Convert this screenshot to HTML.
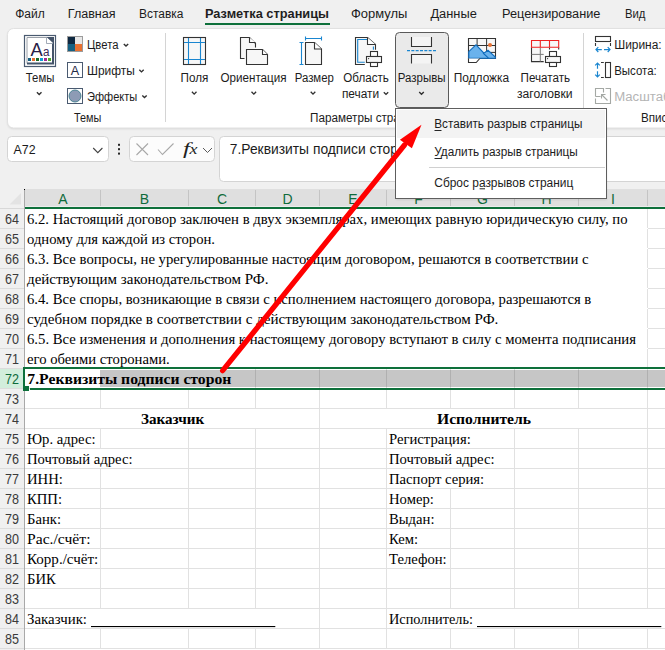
<!DOCTYPE html>
<html><head><meta charset="utf-8"><style>html,body{margin:0;padding:0;background:#f0f0f0;overflow:hidden}svg{display:block}</style></head>
<body><svg width="665" height="650" viewBox="0 0 665 650" shape-rendering="auto">
<rect x="0" y="0" width="665" height="650" fill="#f0f0f0" />
<text x="15.2" y="18" font-family="'Liberation Sans', sans-serif" font-size="12" fill="#1c1c1c" textLength="29.6" lengthAdjust="spacingAndGlyphs" >Файл</text>
<text x="67.8" y="18" font-family="'Liberation Sans', sans-serif" font-size="12" fill="#1c1c1c" textLength="47.8" lengthAdjust="spacingAndGlyphs" >Главная</text>
<text x="139" y="18" font-family="'Liberation Sans', sans-serif" font-size="12" fill="#1c1c1c" textLength="44.4" lengthAdjust="spacingAndGlyphs" >Вставка</text>
<text x="351" y="18" font-family="'Liberation Sans', sans-serif" font-size="12" fill="#1c1c1c" textLength="56.4" lengthAdjust="spacingAndGlyphs" >Формулы</text>
<text x="430.4" y="18" font-family="'Liberation Sans', sans-serif" font-size="12" fill="#1c1c1c" textLength="46.4" lengthAdjust="spacingAndGlyphs" >Данные</text>
<text x="502" y="18" font-family="'Liberation Sans', sans-serif" font-size="12" fill="#1c1c1c" textLength="98.4" lengthAdjust="spacingAndGlyphs" >Рецензирование</text>
<text x="624.9" y="18" font-family="'Liberation Sans', sans-serif" font-size="12" fill="#1c1c1c" textLength="20.5" lengthAdjust="spacingAndGlyphs" >Вид</text>
<text x="205" y="18" font-family="'Liberation Sans', sans-serif" font-size="12" fill="#1f1f1f" font-weight="bold" textLength="124" lengthAdjust="spacingAndGlyphs" >Разметка страницы</text>
<rect x="205" y="23" width="125" height="2" fill="#0e703b" />
<defs><filter id="sh" x="-5%" y="-20%" width="110%" height="140%"><feGaussianBlur stdDeviation="1.2"/></filter></defs>
<rect x="7.5" y="29.5" width="700" height="99.5" rx="6" fill="#000" opacity="0.10" filter="url(#sh)"/>
<rect x="7.5" y="28.5" width="700" height="99.5" rx="6" fill="#ffffff" stroke="#e1e1e1" stroke-width="1"/>
<rect x="24.5" y="35.5" width="31" height="31" fill="#fff" stroke="#4a5a70" stroke-width="1.2"/>
<path d="M27 63.5 V37.5 H47" fill="none" stroke="#9aa0a8" stroke-width="1"/>
<path d="M53 43 V63.5 H27" fill="none" stroke="#44546a" stroke-width="2"/>
<path d="M46.5 37 H54 V44 Z" fill="#44546a"/>
<path d="M46.5 37.5 V43.5 H53" fill="#fff" stroke="#8a95a5" stroke-width="0.8"/>
<text x="30.6" y="55.5" font-family="'Liberation Sans', sans-serif" font-size="18" fill="#2a1d47" textLength="12.2" lengthAdjust="spacingAndGlyphs" >A</text>
<text x="43" y="55.5" font-family="'Liberation Sans', sans-serif" font-size="12" fill="#3b2b5c" textLength="6.5" lengthAdjust="spacingAndGlyphs" >a</text>
<rect x="28" y="58" width="3" height="3" fill="#156082" />
<rect x="32" y="58" width="3" height="3" fill="#e97132" />
<rect x="36" y="58" width="3" height="3" fill="#196b24" />
<rect x="40" y="58" width="3" height="3" fill="#0f9ed5" />
<rect x="44" y="58" width="3" height="3" fill="#a02b93" />
<rect x="48" y="58" width="3" height="3" fill="#4ea72e" />
<text x="25.8" y="82.3" font-family="'Liberation Sans', sans-serif" font-size="12" fill="#1c1c1c" textLength="28.6" lengthAdjust="spacingAndGlyphs" >Темы</text>
<path d="M36.900000000000006 92.25 L39.2 94.55000000000001 L41.5 92.25" fill="none" stroke="#303030" stroke-width="1.35"/>
<rect x="67.5" y="36.5" width="15" height="15" fill="#fff" stroke="#9c9c9c" stroke-width="1"/>
<rect x="68" y="37" width="7" height="7" fill="#0e2841" />
<rect x="75" y="37" width="7" height="7" fill="#e8e8e8" />
<rect x="68" y="44" width="7" height="7" fill="#156082" />
<rect x="75" y="44" width="7" height="7" fill="#e97132" />
<text x="87" y="49" font-family="'Liberation Sans', sans-serif" font-size="12" fill="#1c1c1c" textLength="31.5" lengthAdjust="spacingAndGlyphs" >Цвета</text>
<path d="M123.8 43.9 L126 46.1 L128.2 43.9" fill="none" stroke="#303030" stroke-width="1.35"/>
<rect x="67.5" y="62.5" width="15" height="15" fill="#fff" stroke="#4a5a70" stroke-width="1"/>
<text x="70.8" y="75.2" font-family="'Liberation Sans', sans-serif" font-size="13" fill="#1f2a44" textLength="8.4" lengthAdjust="spacingAndGlyphs" >A</text>
<text x="87" y="75" font-family="'Liberation Sans', sans-serif" font-size="12" fill="#1c1c1c" textLength="47.8" lengthAdjust="spacingAndGlyphs" >Шрифты</text>
<path d="M139.3 69.7 L141.5 71.89999999999999 L143.7 69.7" fill="none" stroke="#303030" stroke-width="1.35"/>
<rect x="67.5" y="88.5" width="15" height="15" fill="#fff" stroke="#4a5a70" stroke-width="1"/>
<circle cx="75" cy="96" r="6" fill="#8d9bb5" stroke="#3f7d8c" stroke-width="0.9"/>
<text x="87" y="101" font-family="'Liberation Sans', sans-serif" font-size="12" fill="#1c1c1c" textLength="50.3" lengthAdjust="spacingAndGlyphs" >Эффекты</text>
<path d="M142.3 95.4 L144.5 97.6 L146.7 95.4" fill="none" stroke="#303030" stroke-width="1.35"/>
<text x="74" y="122" font-family="'Liberation Sans', sans-serif" font-size="12" fill="#1c1c1c" textLength="27.3" lengthAdjust="spacingAndGlyphs" >Темы</text>
<rect x="165" y="33" width="1" height="89" fill="#d4d4d4" />
<rect x="183.5" y="37.5" width="22" height="27" fill="#f7f7f7" stroke="#333333" stroke-width="1.1"/>
<path d="M188.5 38 V64 M200.5 38 V64 M184 42.5 H205 M184 59.5 H205" stroke="#1a86d0" stroke-width="1.1"/>
<text x="180.6" y="82.1" font-family="'Liberation Sans', sans-serif" font-size="12" fill="#1c1c1c" textLength="27.8" lengthAdjust="spacingAndGlyphs" >Поля</text>
<path d="M191.89999999999998 91.85 L194.2 94.15 L196.5 91.85" fill="none" stroke="#303030" stroke-width="1.35"/>
<path d="M244.5 58.5 H240.5 V37.5 H249.5 L255.5 43.5 V47.5" fill="#f7f7f7" stroke="#333333" stroke-width="1.1"/>
<path d="M249.5 37.5 V42.5 H255.5" fill="#fff" stroke="#333333" stroke-width="1.1"/>
<path d="M246.5 49.5 H262.5 L267.5 54.5 V64.5 H246.5 Z" fill="#f7f7f7" stroke="#333333" stroke-width="1.1"/>
<path d="M262.5 49.5 V54.5 H267.5" fill="#fff" stroke="#333333" stroke-width="1.1"/>
<text x="220.5" y="82.1" font-family="'Liberation Sans', sans-serif" font-size="12" fill="#1c1c1c" textLength="66" lengthAdjust="spacingAndGlyphs" >Ориентация</text>
<path d="M251.5 91.85 L253.8 94.15 L256.1 91.85" fill="none" stroke="#303030" stroke-width="1.35"/>
<path d="M305.5 42.5 H314.5 L321.5 49 V64.5 H305.5 Z" fill="#f7f7f7" stroke="#333333" stroke-width="1.1"/>
<path d="M314.5 42.5 V49 H321.5" fill="#fff" stroke="#333333" stroke-width="1.1"/>
<path d="M305.5 38.5 H321.5 M305.5 36.5 V40.5 M321.5 36.5 V40.5 M301.5 42.5 V64.5 M299.5 42.5 H303.5 M299.5 64.5 H303.5" stroke="#1a86d0" stroke-width="1.1" fill="none"/>
<text x="294.7" y="82.1" font-family="'Liberation Sans', sans-serif" font-size="12" fill="#1c1c1c" textLength="39.2" lengthAdjust="spacingAndGlyphs" >Размер</text>
<path d="M310.7 91.85 L313 94.15 L315.3 91.85" fill="none" stroke="#303030" stroke-width="1.35"/>
<path d="M364.8 64.5 H355.5 V37.5 H367.5 L375.5 44.5 V49.7" fill="#f7f7f7" stroke="#333333" stroke-width="1.1"/>
<path d="M367.5 37.5 V44.5 H375.5" fill="#fff" stroke="#333333" stroke-width="1.1"/>
<path d="M367 39.5 H357.7 V62.3 H364.8 M373.4 46.5 V49.7" fill="none" stroke="#1a86d0" stroke-width="1.1"/>
<rect x="370.5" y="51.5" width="7" height="5" fill="#fff" stroke="#333333" stroke-width="1.1"/>
<rect x="366.5" y="56.5" width="15" height="6" fill="#f7f7f7" stroke="#333333" stroke-width="1.1"/>
<rect x="370.5" y="62.5" width="7" height="4" fill="#fff" stroke="#333333" stroke-width="1.1"/>
<circle cx="368.6" cy="58.6" r="0.6" fill="#333333"/>
<text x="343.3" y="82.1" font-family="'Liberation Sans', sans-serif" font-size="12" fill="#1c1c1c" textLength="45.5" lengthAdjust="spacingAndGlyphs" >Область</text>
<text x="341.9" y="97.8" font-family="'Liberation Sans', sans-serif" font-size="12" fill="#1c1c1c" textLength="37.3" lengthAdjust="spacingAndGlyphs" >печати</text>
<path d="M383.8 92.2 L386 94.39999999999999 L388.2 92.2" fill="none" stroke="#303030" stroke-width="1.35"/>
<rect x="395.5" y="32.5" width="53" height="75" rx="4" fill="#eaeaea" stroke="#5a5a5a" stroke-width="1"/>
<path d="M411.5 37 V46.5 H431.5 V37 M411.5 63.5 V54.5 H431.5 V63.5" fill="#f4f4f4" stroke="#333333" stroke-width="1.1"/>
<path d="M407 50.6 H436" stroke="#1a86d0" stroke-width="1.2" stroke-dasharray="3 1.33"/>
<text x="397.8" y="81.6" font-family="'Liberation Sans', sans-serif" font-size="12" fill="#1c1c1c" textLength="47.8" lengthAdjust="spacingAndGlyphs" >Разрывы</text>
<path d="M419.2 92.05 L421.5 94.35000000000001 L423.8 92.05" fill="none" stroke="#303030" stroke-width="1.35"/>
<path d="M468.5 58.5 V38.5 H495.5 V58.5 Z" fill="#f7f7f7" stroke="#333333" stroke-width="1.1"/>
<path d="M477.1 38.5 V46 M486.6 38.5 V52 M468.5 45.5 H495.5 M486.6 52.4 H495.5" stroke="#333333" stroke-width="1"/>
<path d="M468.8 51.7 L476 44.9 L488.8 58.3 H468.8 Z" fill="#6ab2ec" stroke="#0f6cbd" stroke-width="1.1"/>
<path d="M483.5 53.5 L488 50.3 L495.3 57 V58.3 H488.8 Z" fill="#6ab2ec" stroke="#0f6cbd" stroke-width="1.1"/>
<circle cx="490" cy="45" r="2" fill="#e97132"/>
<path d="M468.5 58.5 V62.5 H476.2 L479.8 58.5" fill="#fff" stroke="#333333" stroke-width="1.1"/>
<text x="453.7" y="82.2" font-family="'Liberation Sans', sans-serif" font-size="12" fill="#1c1c1c" textLength="55.5" lengthAdjust="spacingAndGlyphs" >Подложка</text>
<rect x="531.5" y="47.3" width="12" height="14.3" fill="#f7f7f7"/>
<path d="M531.5 47.3 V61.6 H543.7 M549.5 47.3 V49.5 M558.7 47.3 V49.5" fill="none" stroke="#333333" stroke-width="1.1"/>
<path d="M540.3 47.3 V61.6 M531.5 54.4 H543.7" fill="none" stroke="#7a7a7a" stroke-width="1"/>
<path d="M531.5 40.5 H558.7 V47.3 H531.5 Z M540.3 40.5 V47.3 M549.5 40.5 V47.3" fill="#f7f7f7" stroke="#ee2222" stroke-width="1.1"/>
<rect x="549.5" y="51.5" width="7" height="5" fill="#fff" stroke="#333333" stroke-width="1.1"/>
<rect x="545.5" y="56.5" width="15" height="6" fill="#f7f7f7" stroke="#333333" stroke-width="1.1"/>
<rect x="549.5" y="62.5" width="7" height="4" fill="#fff" stroke="#333333" stroke-width="1.1"/>
<circle cx="547.6" cy="58.6" r="0.6" fill="#333333"/>
<text x="520.6" y="82.2" font-family="'Liberation Sans', sans-serif" font-size="12" fill="#1c1c1c" textLength="49.5" lengthAdjust="spacingAndGlyphs" >Печатать</text>
<text x="517" y="98" font-family="'Liberation Sans', sans-serif" font-size="12" fill="#1c1c1c" textLength="55.5" lengthAdjust="spacingAndGlyphs" >заголовки</text>
<text x="310" y="121.8" font-family="'Liberation Sans', sans-serif" font-size="12" fill="#1c1c1c" textLength="118" lengthAdjust="spacingAndGlyphs" >Параметры страницы</text>
<rect x="583" y="33" width="1" height="89" fill="#d4d4d4" />
<rect x="595.5" y="36.5" width="15" height="5" fill="#fff" stroke="#333333" stroke-width="1.1"/>
<path d="M595.5 43 V46 M610.5 43 V46" stroke="#333333" stroke-width="1.1"/>
<path d="M596 49.6 H601.8 M604 49.6 H610 M598.3 47.2 L596 49.6 L598.3 52 M607.7 47.2 L610 49.6 L607.7 52" fill="none" stroke="#1a86d0" stroke-width="1.2"/>
<text x="614.2" y="48.7" font-family="'Liberation Sans', sans-serif" font-size="12" fill="#1c1c1c" textLength="47.5" lengthAdjust="spacingAndGlyphs" >Ширина:</text>
<rect x="605.5" y="62.5" width="5" height="15" fill="#fff" stroke="#333333" stroke-width="1.1"/>
<path d="M601 62.5 H603.8 M601 77.5 H603.8" stroke="#333333" stroke-width="1.1"/>
<path d="M597.5 63 V68.8 M597.5 71.3 V77 M595.2 65.3 L597.5 63 L599.8 65.3 M595.2 74.7 L597.5 77 L599.8 74.7" fill="none" stroke="#1a86d0" stroke-width="1.2"/>
<text x="614.2" y="74.7" font-family="'Liberation Sans', sans-serif" font-size="12" fill="#1c1c1c" textLength="42.5" lengthAdjust="spacingAndGlyphs" >Высота:</text>
<path d="M595.5 96.5 V88.5 H603.5 V92.5 M600.5 96.5 H595.5 M605.5 88.5 H610.5 V103.5 H595.5 V98.5" fill="none" stroke="#a4a8a4" stroke-width="1.1"/>
<path d="M607.5 100.5 L601.5 94.5 M601.5 98.5 V94.5 H605.5" fill="none" stroke="#a4a8a4" stroke-width="1.1"/>
<text x="614.2" y="101" font-family="'Liberation Sans', sans-serif" font-size="12" fill="#b4b4b4" textLength="60" lengthAdjust="spacingAndGlyphs" >Масштаб:</text>
<text x="641" y="121.7" font-family="'Liberation Sans', sans-serif" font-size="12" fill="#1c1c1c" textLength="44" lengthAdjust="spacingAndGlyphs" >Вписать</text>
<rect x="7.5" y="136.5" width="101" height="25" rx="4" fill="#fff" stroke="#d4d4d4" stroke-width="1"/>
<text x="13.6" y="154" font-family="'Liberation Sans', sans-serif" font-size="13" fill="#1c1c1c" textLength="22" lengthAdjust="spacingAndGlyphs" >A72</text>
<path d="M93.2 148 L97.8 152.6 L102.4 148" fill="none" stroke="#424242" stroke-width="1.1"/>
<rect x="118" y="143.8" width="2" height="2" fill="#262626" />
<rect x="118" y="148.2" width="2" height="2" fill="#262626" />
<rect x="118" y="152.6" width="2" height="2" fill="#262626" />
<rect x="129.5" y="136.5" width="85" height="25" rx="4" fill="#fcfcfc" stroke="#d4d4d4" stroke-width="1"/>
<path d="M136.5 143.5 L148 155 M148 143.5 L136.5 155" stroke="#a8a8a8" stroke-width="1.1"/>
<path d="M158 149.5 L162.5 154.5 L173.5 143.5" fill="none" stroke="#a8a8a8" stroke-width="1.1"/>
<text x="183" y="153.5" font-family="'Liberation Serif', serif" font-size="17" fill="#222" textLength="7" lengthAdjust="spacingAndGlyphs" font-style="italic">f</text>
<text x="189.5" y="153.5" font-family="'Liberation Serif', serif" font-size="15" fill="#222" textLength="8" lengthAdjust="spacingAndGlyphs" font-style="italic">x</text>
<path d="M203 148 L207.5 152.5 L212 148" fill="none" stroke="#5a5a5a" stroke-width="1"/>
<rect x="219.5" y="136.5" width="480" height="45" rx="4" fill="#fff" stroke="#d4d4d4" stroke-width="1"/>
<text x="229.8" y="154.3" font-family="'Liberation Sans', sans-serif" font-size="14" fill="#1c1c1c" textLength="183.5" lengthAdjust="spacingAndGlyphs" >7.Реквизиты подписи сторон</text>
<rect x="25" y="189" width="640" height="18" fill="#dfdfdf" />
<rect x="25" y="206" width="640" height="1" fill="#ececec" />
<rect x="100" y="190" width="1" height="16" fill="#c4c4c4" />
<rect x="188" y="190" width="1" height="16" fill="#c4c4c4" />
<rect x="255" y="190" width="1" height="16" fill="#c4c4c4" />
<rect x="319" y="190" width="1" height="16" fill="#c4c4c4" />
<rect x="386" y="190" width="1" height="16" fill="#c4c4c4" />
<rect x="450" y="190" width="1" height="16" fill="#c4c4c4" />
<rect x="514" y="190" width="1" height="16" fill="#c4c4c4" />
<rect x="578" y="190" width="1" height="16" fill="#c4c4c4" />
<rect x="647" y="190" width="1" height="16" fill="#c4c4c4" />
<rect x="24" y="207" width="641" height="2" fill="#0e703b" />
<rect x="0" y="189" width="24" height="20" fill="#f0f0f0" />
<path d="M21 193 V204.5 H9.5 Z" fill="#e3e3e3"/>
<rect x="0" y="208" width="24" height="1" fill="#d8d8d8" />
<text x="63" y="204" font-family="'Liberation Sans', sans-serif" font-size="14" fill="#0f6b3b" text-anchor="middle" >A</text>
<text x="144.5" y="204" font-family="'Liberation Sans', sans-serif" font-size="14" fill="#0f6b3b" text-anchor="middle" >B</text>
<text x="222" y="204" font-family="'Liberation Sans', sans-serif" font-size="14" fill="#0f6b3b" text-anchor="middle" >C</text>
<text x="287.5" y="204" font-family="'Liberation Sans', sans-serif" font-size="14" fill="#0f6b3b" text-anchor="middle" >D</text>
<text x="353" y="204" font-family="'Liberation Sans', sans-serif" font-size="14" fill="#0f6b3b" text-anchor="middle" >E</text>
<text x="418.5" y="204" font-family="'Liberation Sans', sans-serif" font-size="14" fill="#0f6b3b" text-anchor="middle" >F</text>
<text x="482.5" y="204" font-family="'Liberation Sans', sans-serif" font-size="14" fill="#0f6b3b" text-anchor="middle" >G</text>
<text x="546.5" y="204" font-family="'Liberation Sans', sans-serif" font-size="14" fill="#0f6b3b" text-anchor="middle" >H</text>
<text x="613" y="204" font-family="'Liberation Sans', sans-serif" font-size="14" fill="#0f6b3b" text-anchor="middle" >I</text>
<text x="673.5" y="204" font-family="'Liberation Sans', sans-serif" font-size="14" fill="#0f6b3b" text-anchor="middle" >J</text>
<rect x="25" y="209" width="640" height="441" fill="#ffffff" />
<rect x="0" y="209" width="24" height="441" fill="#f0f0f0" />
<rect x="24" y="189" width="1" height="461" fill="#a9a9a9" />
<rect x="24" y="189" width="1" height="1" fill="#000" />
<rect x="0" y="228" width="24" height="1" fill="#dcdcdc" />
<rect x="0" y="248" width="24" height="1" fill="#dcdcdc" />
<rect x="0" y="268" width="24" height="1" fill="#dcdcdc" />
<rect x="0" y="288" width="24" height="1" fill="#dcdcdc" />
<rect x="0" y="308" width="24" height="1" fill="#dcdcdc" />
<rect x="0" y="328" width="24" height="1" fill="#dcdcdc" />
<rect x="0" y="348" width="24" height="1" fill="#dcdcdc" />
<rect x="0" y="368" width="24" height="1" fill="#dcdcdc" />
<rect x="0" y="388" width="24" height="1" fill="#dcdcdc" />
<rect x="0" y="408" width="24" height="1" fill="#dcdcdc" />
<rect x="0" y="428" width="24" height="1" fill="#dcdcdc" />
<rect x="0" y="448" width="24" height="1" fill="#dcdcdc" />
<rect x="0" y="468" width="24" height="1" fill="#dcdcdc" />
<rect x="0" y="488" width="24" height="1" fill="#dcdcdc" />
<rect x="0" y="508" width="24" height="1" fill="#dcdcdc" />
<rect x="0" y="528" width="24" height="1" fill="#dcdcdc" />
<rect x="0" y="548" width="24" height="1" fill="#dcdcdc" />
<rect x="0" y="568" width="24" height="1" fill="#dcdcdc" />
<rect x="0" y="588" width="24" height="1" fill="#dcdcdc" />
<rect x="0" y="608" width="24" height="1" fill="#dcdcdc" />
<rect x="0" y="628" width="24" height="1" fill="#dcdcdc" />
<rect x="0" y="648" width="24" height="1" fill="#dcdcdc" />
<rect x="0" y="369" width="24" height="19" fill="#d2eedc" />
<text x="12" y="224" font-family="'Liberation Sans', sans-serif" font-size="14" fill="#3a3a3a" textLength="14" lengthAdjust="spacingAndGlyphs" text-anchor="middle" >64</text>
<text x="12" y="244" font-family="'Liberation Sans', sans-serif" font-size="14" fill="#3a3a3a" textLength="14" lengthAdjust="spacingAndGlyphs" text-anchor="middle" >65</text>
<text x="12" y="264" font-family="'Liberation Sans', sans-serif" font-size="14" fill="#3a3a3a" textLength="14" lengthAdjust="spacingAndGlyphs" text-anchor="middle" >66</text>
<text x="12" y="284" font-family="'Liberation Sans', sans-serif" font-size="14" fill="#3a3a3a" textLength="14" lengthAdjust="spacingAndGlyphs" text-anchor="middle" >67</text>
<text x="12" y="304" font-family="'Liberation Sans', sans-serif" font-size="14" fill="#3a3a3a" textLength="14" lengthAdjust="spacingAndGlyphs" text-anchor="middle" >68</text>
<text x="12" y="324" font-family="'Liberation Sans', sans-serif" font-size="14" fill="#3a3a3a" textLength="14" lengthAdjust="spacingAndGlyphs" text-anchor="middle" >69</text>
<text x="12" y="344" font-family="'Liberation Sans', sans-serif" font-size="14" fill="#3a3a3a" textLength="14" lengthAdjust="spacingAndGlyphs" text-anchor="middle" >70</text>
<text x="12" y="364" font-family="'Liberation Sans', sans-serif" font-size="14" fill="#3a3a3a" textLength="14" lengthAdjust="spacingAndGlyphs" text-anchor="middle" >71</text>
<text x="12" y="384" font-family="'Liberation Sans', sans-serif" font-size="14" fill="#0f6b3b" textLength="14" lengthAdjust="spacingAndGlyphs" text-anchor="middle" >72</text>
<text x="12" y="404" font-family="'Liberation Sans', sans-serif" font-size="14" fill="#3a3a3a" textLength="14" lengthAdjust="spacingAndGlyphs" text-anchor="middle" >73</text>
<text x="12" y="424" font-family="'Liberation Sans', sans-serif" font-size="14" fill="#3a3a3a" textLength="14" lengthAdjust="spacingAndGlyphs" text-anchor="middle" >74</text>
<text x="12" y="444" font-family="'Liberation Sans', sans-serif" font-size="14" fill="#3a3a3a" textLength="14" lengthAdjust="spacingAndGlyphs" text-anchor="middle" >75</text>
<text x="12" y="464" font-family="'Liberation Sans', sans-serif" font-size="14" fill="#3a3a3a" textLength="14" lengthAdjust="spacingAndGlyphs" text-anchor="middle" >76</text>
<text x="12" y="484" font-family="'Liberation Sans', sans-serif" font-size="14" fill="#3a3a3a" textLength="14" lengthAdjust="spacingAndGlyphs" text-anchor="middle" >77</text>
<text x="12" y="504" font-family="'Liberation Sans', sans-serif" font-size="14" fill="#3a3a3a" textLength="14" lengthAdjust="spacingAndGlyphs" text-anchor="middle" >78</text>
<text x="12" y="524" font-family="'Liberation Sans', sans-serif" font-size="14" fill="#3a3a3a" textLength="14" lengthAdjust="spacingAndGlyphs" text-anchor="middle" >79</text>
<text x="12" y="544" font-family="'Liberation Sans', sans-serif" font-size="14" fill="#3a3a3a" textLength="14" lengthAdjust="spacingAndGlyphs" text-anchor="middle" >80</text>
<text x="12" y="564" font-family="'Liberation Sans', sans-serif" font-size="14" fill="#3a3a3a" textLength="14" lengthAdjust="spacingAndGlyphs" text-anchor="middle" >81</text>
<text x="12" y="584" font-family="'Liberation Sans', sans-serif" font-size="14" fill="#3a3a3a" textLength="14" lengthAdjust="spacingAndGlyphs" text-anchor="middle" >82</text>
<text x="12" y="604" font-family="'Liberation Sans', sans-serif" font-size="14" fill="#3a3a3a" textLength="14" lengthAdjust="spacingAndGlyphs" text-anchor="middle" >83</text>
<text x="12" y="624" font-family="'Liberation Sans', sans-serif" font-size="14" fill="#3a3a3a" textLength="14" lengthAdjust="spacingAndGlyphs" text-anchor="middle" >84</text>
<text x="12" y="644" font-family="'Liberation Sans', sans-serif" font-size="14" fill="#3a3a3a" textLength="14" lengthAdjust="spacingAndGlyphs" text-anchor="middle" >85</text>
<rect x="648" y="228" width="17" height="1" fill="#e1e1e1" />
<rect x="648" y="248" width="17" height="1" fill="#e1e1e1" />
<rect x="648" y="268" width="17" height="1" fill="#e1e1e1" />
<rect x="648" y="288" width="17" height="1" fill="#e1e1e1" />
<rect x="648" y="308" width="17" height="1" fill="#e1e1e1" />
<rect x="648" y="328" width="17" height="1" fill="#e1e1e1" />
<rect x="648" y="348" width="17" height="1" fill="#e1e1e1" />
<rect x="25" y="368" width="640" height="1" fill="#e1e1e1" />
<rect x="25" y="388" width="640" height="1" fill="#e1e1e1" />
<rect x="25" y="408" width="640" height="1" fill="#e1e1e1" />
<rect x="25" y="428" width="640" height="1" fill="#e1e1e1" />
<rect x="25" y="448" width="640" height="1" fill="#e1e1e1" />
<rect x="25" y="468" width="640" height="1" fill="#e1e1e1" />
<rect x="25" y="488" width="640" height="1" fill="#e1e1e1" />
<rect x="25" y="508" width="640" height="1" fill="#e1e1e1" />
<rect x="25" y="528" width="640" height="1" fill="#e1e1e1" />
<rect x="25" y="548" width="640" height="1" fill="#e1e1e1" />
<rect x="25" y="568" width="640" height="1" fill="#e1e1e1" />
<rect x="25" y="588" width="640" height="1" fill="#e1e1e1" />
<rect x="25" y="608" width="640" height="1" fill="#e1e1e1" />
<rect x="25" y="628" width="640" height="1" fill="#e1e1e1" />
<rect x="25" y="648" width="640" height="1" fill="#e1e1e1" />
<rect x="647" y="209" width="1" height="19" fill="#e1e1e1" />
<rect x="647" y="229" width="1" height="19" fill="#e1e1e1" />
<rect x="647" y="249" width="1" height="19" fill="#e1e1e1" />
<rect x="647" y="269" width="1" height="19" fill="#e1e1e1" />
<rect x="647" y="289" width="1" height="19" fill="#e1e1e1" />
<rect x="647" y="309" width="1" height="19" fill="#e1e1e1" />
<rect x="647" y="329" width="1" height="19" fill="#e1e1e1" />
<rect x="647" y="349" width="1" height="19" fill="#e1e1e1" />
<rect x="255" y="369" width="1" height="19" fill="#e1e1e1" />
<rect x="319" y="369" width="1" height="19" fill="#e1e1e1" />
<rect x="386" y="369" width="1" height="19" fill="#e1e1e1" />
<rect x="450" y="369" width="1" height="19" fill="#e1e1e1" />
<rect x="514" y="369" width="1" height="19" fill="#e1e1e1" />
<rect x="578" y="369" width="1" height="19" fill="#e1e1e1" />
<rect x="647" y="369" width="1" height="19" fill="#e1e1e1" />
<rect x="100" y="389" width="1" height="19" fill="#e1e1e1" />
<rect x="188" y="389" width="1" height="19" fill="#e1e1e1" />
<rect x="255" y="389" width="1" height="19" fill="#e1e1e1" />
<rect x="319" y="389" width="1" height="19" fill="#e1e1e1" />
<rect x="386" y="389" width="1" height="19" fill="#e1e1e1" />
<rect x="450" y="389" width="1" height="19" fill="#e1e1e1" />
<rect x="514" y="389" width="1" height="19" fill="#e1e1e1" />
<rect x="578" y="389" width="1" height="19" fill="#e1e1e1" />
<rect x="647" y="389" width="1" height="19" fill="#e1e1e1" />
<rect x="319" y="409" width="1" height="19" fill="#e1e1e1" />
<rect x="647" y="409" width="1" height="19" fill="#e1e1e1" />
<rect x="100" y="429" width="1" height="19" fill="#e1e1e1" />
<rect x="188" y="429" width="1" height="19" fill="#e1e1e1" />
<rect x="255" y="429" width="1" height="19" fill="#e1e1e1" />
<rect x="319" y="429" width="1" height="19" fill="#e1e1e1" />
<rect x="386" y="429" width="1" height="19" fill="#e1e1e1" />
<rect x="514" y="429" width="1" height="19" fill="#e1e1e1" />
<rect x="578" y="429" width="1" height="19" fill="#e1e1e1" />
<rect x="647" y="429" width="1" height="19" fill="#e1e1e1" />
<rect x="188" y="449" width="1" height="19" fill="#e1e1e1" />
<rect x="255" y="449" width="1" height="19" fill="#e1e1e1" />
<rect x="319" y="449" width="1" height="19" fill="#e1e1e1" />
<rect x="386" y="449" width="1" height="19" fill="#e1e1e1" />
<rect x="514" y="449" width="1" height="19" fill="#e1e1e1" />
<rect x="578" y="449" width="1" height="19" fill="#e1e1e1" />
<rect x="647" y="449" width="1" height="19" fill="#e1e1e1" />
<rect x="100" y="469" width="1" height="19" fill="#e1e1e1" />
<rect x="188" y="469" width="1" height="19" fill="#e1e1e1" />
<rect x="255" y="469" width="1" height="19" fill="#e1e1e1" />
<rect x="319" y="469" width="1" height="19" fill="#e1e1e1" />
<rect x="386" y="469" width="1" height="19" fill="#e1e1e1" />
<rect x="514" y="469" width="1" height="19" fill="#e1e1e1" />
<rect x="578" y="469" width="1" height="19" fill="#e1e1e1" />
<rect x="647" y="469" width="1" height="19" fill="#e1e1e1" />
<rect x="100" y="489" width="1" height="19" fill="#e1e1e1" />
<rect x="188" y="489" width="1" height="19" fill="#e1e1e1" />
<rect x="255" y="489" width="1" height="19" fill="#e1e1e1" />
<rect x="319" y="489" width="1" height="19" fill="#e1e1e1" />
<rect x="386" y="489" width="1" height="19" fill="#e1e1e1" />
<rect x="450" y="489" width="1" height="19" fill="#e1e1e1" />
<rect x="514" y="489" width="1" height="19" fill="#e1e1e1" />
<rect x="578" y="489" width="1" height="19" fill="#e1e1e1" />
<rect x="647" y="489" width="1" height="19" fill="#e1e1e1" />
<rect x="100" y="509" width="1" height="19" fill="#e1e1e1" />
<rect x="188" y="509" width="1" height="19" fill="#e1e1e1" />
<rect x="255" y="509" width="1" height="19" fill="#e1e1e1" />
<rect x="319" y="509" width="1" height="19" fill="#e1e1e1" />
<rect x="386" y="509" width="1" height="19" fill="#e1e1e1" />
<rect x="450" y="509" width="1" height="19" fill="#e1e1e1" />
<rect x="514" y="509" width="1" height="19" fill="#e1e1e1" />
<rect x="578" y="509" width="1" height="19" fill="#e1e1e1" />
<rect x="647" y="509" width="1" height="19" fill="#e1e1e1" />
<rect x="100" y="529" width="1" height="19" fill="#e1e1e1" />
<rect x="188" y="529" width="1" height="19" fill="#e1e1e1" />
<rect x="255" y="529" width="1" height="19" fill="#e1e1e1" />
<rect x="319" y="529" width="1" height="19" fill="#e1e1e1" />
<rect x="386" y="529" width="1" height="19" fill="#e1e1e1" />
<rect x="450" y="529" width="1" height="19" fill="#e1e1e1" />
<rect x="514" y="529" width="1" height="19" fill="#e1e1e1" />
<rect x="578" y="529" width="1" height="19" fill="#e1e1e1" />
<rect x="647" y="529" width="1" height="19" fill="#e1e1e1" />
<rect x="100" y="549" width="1" height="19" fill="#e1e1e1" />
<rect x="188" y="549" width="1" height="19" fill="#e1e1e1" />
<rect x="255" y="549" width="1" height="19" fill="#e1e1e1" />
<rect x="319" y="549" width="1" height="19" fill="#e1e1e1" />
<rect x="386" y="549" width="1" height="19" fill="#e1e1e1" />
<rect x="450" y="549" width="1" height="19" fill="#e1e1e1" />
<rect x="514" y="549" width="1" height="19" fill="#e1e1e1" />
<rect x="578" y="549" width="1" height="19" fill="#e1e1e1" />
<rect x="647" y="549" width="1" height="19" fill="#e1e1e1" />
<rect x="100" y="569" width="1" height="19" fill="#e1e1e1" />
<rect x="188" y="569" width="1" height="19" fill="#e1e1e1" />
<rect x="255" y="569" width="1" height="19" fill="#e1e1e1" />
<rect x="319" y="569" width="1" height="19" fill="#e1e1e1" />
<rect x="386" y="569" width="1" height="19" fill="#e1e1e1" />
<rect x="450" y="569" width="1" height="19" fill="#e1e1e1" />
<rect x="514" y="569" width="1" height="19" fill="#e1e1e1" />
<rect x="578" y="569" width="1" height="19" fill="#e1e1e1" />
<rect x="647" y="569" width="1" height="19" fill="#e1e1e1" />
<rect x="100" y="589" width="1" height="19" fill="#e1e1e1" />
<rect x="188" y="589" width="1" height="19" fill="#e1e1e1" />
<rect x="255" y="589" width="1" height="19" fill="#e1e1e1" />
<rect x="319" y="589" width="1" height="19" fill="#e1e1e1" />
<rect x="386" y="589" width="1" height="19" fill="#e1e1e1" />
<rect x="450" y="589" width="1" height="19" fill="#e1e1e1" />
<rect x="514" y="589" width="1" height="19" fill="#e1e1e1" />
<rect x="578" y="589" width="1" height="19" fill="#e1e1e1" />
<rect x="647" y="589" width="1" height="19" fill="#e1e1e1" />
<rect x="319" y="609" width="1" height="19" fill="#e1e1e1" />
<rect x="386" y="609" width="1" height="19" fill="#e1e1e1" />
<rect x="100" y="629" width="1" height="19" fill="#e1e1e1" />
<rect x="188" y="629" width="1" height="19" fill="#e1e1e1" />
<rect x="255" y="629" width="1" height="19" fill="#e1e1e1" />
<rect x="319" y="629" width="1" height="19" fill="#e1e1e1" />
<rect x="386" y="629" width="1" height="19" fill="#e1e1e1" />
<rect x="450" y="629" width="1" height="19" fill="#e1e1e1" />
<rect x="514" y="629" width="1" height="19" fill="#e1e1e1" />
<rect x="578" y="629" width="1" height="19" fill="#e1e1e1" />
<rect x="647" y="629" width="1" height="19" fill="#e1e1e1" />
<rect x="25" y="369" width="75" height="19" fill="#ffffff" />
<rect x="100" y="370" width="565" height="17" fill="#c6c6c6" />
<rect x="255" y="370" width="1" height="17" fill="#b0b0b0" />
<rect x="319" y="370" width="1" height="17" fill="#b0b0b0" />
<rect x="386" y="370" width="1" height="17" fill="#b0b0b0" />
<rect x="450" y="370" width="1" height="17" fill="#b0b0b0" />
<rect x="514" y="370" width="1" height="17" fill="#b0b0b0" />
<rect x="578" y="370" width="1" height="17" fill="#b0b0b0" />
<rect x="647" y="370" width="1" height="17" fill="#b0b0b0" />
<rect x="23" y="367" width="642" height="2" fill="#0e703b" />
<rect x="30" y="388" width="635" height="2" fill="#0e703b" />
<rect x="23" y="367" width="2" height="20" fill="#0e703b" />
<rect x="23" y="386" width="6" height="5" fill="#0e703b" />
<text x="27" y="224" font-family="'Liberation Serif', serif" font-size="14.67" fill="#000000" textLength="600.5" lengthAdjust="spacingAndGlyphs" >6.2. Настоящий договор заключен в двух экземплярах, имеющих равную юридическую силу, по</text>
<text x="27" y="244" font-family="'Liberation Serif', serif" font-size="14.67" fill="#000000" >одному для каждой из сторон.</text>
<text x="27" y="264" font-family="'Liberation Serif', serif" font-size="14.67" fill="#000000" textLength="561.5" lengthAdjust="spacingAndGlyphs" >6.3. Все вопросы, не урегулированные настоящим договором, решаются в соответствии с</text>
<text x="27" y="284" font-family="'Liberation Serif', serif" font-size="14.67" fill="#000000" textLength="241.5" lengthAdjust="spacingAndGlyphs" >действующим законодательством РФ.</text>
<text x="27" y="304" font-family="'Liberation Serif', serif" font-size="14.67" fill="#000000" textLength="564.3" lengthAdjust="spacingAndGlyphs" >6.4. Все споры, возникающие в связи с исполнением настоящего договора, разрешаются в</text>
<text x="27" y="324" font-family="'Liberation Serif', serif" font-size="14.67" fill="#000000" textLength="471.4" lengthAdjust="spacingAndGlyphs" >судебном порядке в соответствии с действующим законодательством РФ.</text>
<text x="27" y="344" font-family="'Liberation Serif', serif" font-size="14.67" fill="#000000" textLength="609" lengthAdjust="spacingAndGlyphs" >6.5. Все изменения и дополнения к настоящему договору вступают в силу с момента подписания</text>
<text x="27" y="364" font-family="'Liberation Serif', serif" font-size="14.67" fill="#000000" >его обеими сторонами.</text>
<text x="27.3" y="384" font-family="'Liberation Serif', serif" font-size="14.67" fill="#000000" font-weight="bold" textLength="204" lengthAdjust="spacingAndGlyphs" >7.Реквизиты подписи сторон</text>
<text x="141" y="424" font-family="'Liberation Serif', serif" font-size="14.67" fill="#000000" font-weight="bold" textLength="63.3" lengthAdjust="spacingAndGlyphs" >Заказчик</text>
<text x="437" y="424" font-family="'Liberation Serif', serif" font-size="14.67" fill="#000000" font-weight="bold" textLength="94" lengthAdjust="spacingAndGlyphs" >Исполнитель</text>
<text x="27" y="444" font-family="'Liberation Serif', serif" font-size="14.67" fill="#000000" >Юр. адрес:</text>
<text x="27" y="464" font-family="'Liberation Serif', serif" font-size="14.67" fill="#000000" >Почтовый адрес:</text>
<text x="27" y="484" font-family="'Liberation Serif', serif" font-size="14.67" fill="#000000" >ИНН:</text>
<text x="27" y="504" font-family="'Liberation Serif', serif" font-size="14.67" fill="#000000" >КПП:</text>
<text x="27" y="524" font-family="'Liberation Serif', serif" font-size="14.67" fill="#000000" >Банк:</text>
<text x="27" y="544" font-family="'Liberation Serif', serif" font-size="14.67" fill="#000000" textLength="63.5" lengthAdjust="spacingAndGlyphs" >Рас./счёт:</text>
<text x="27" y="564" font-family="'Liberation Serif', serif" font-size="14.67" fill="#000000" textLength="71.3" lengthAdjust="spacingAndGlyphs" >Корр./счёт:</text>
<text x="27" y="584" font-family="'Liberation Serif', serif" font-size="14.67" fill="#000000" >БИК</text>
<text x="389" y="444" font-family="'Liberation Serif', serif" font-size="14.67" fill="#000000" >Регистрация:</text>
<text x="389" y="464" font-family="'Liberation Serif', serif" font-size="14.67" fill="#000000" >Почтовый адрес:</text>
<text x="389" y="484" font-family="'Liberation Serif', serif" font-size="14.67" fill="#000000" >Паспорт серия:</text>
<text x="389" y="504" font-family="'Liberation Serif', serif" font-size="14.67" fill="#000000" >Номер:</text>
<text x="389" y="524" font-family="'Liberation Serif', serif" font-size="14.67" fill="#000000" >Выдан:</text>
<text x="389" y="544" font-family="'Liberation Serif', serif" font-size="14.67" fill="#000000" >Кем:</text>
<text x="389" y="564" font-family="'Liberation Serif', serif" font-size="14.67" fill="#000000" >Телефон:</text>
<text x="27" y="624" font-family="'Liberation Serif', serif" font-size="14.67" fill="#000000" textLength="60" lengthAdjust="spacingAndGlyphs" >Заказчик:</text>
<rect x="91" y="626" width="184.3" height="1.1" fill="#000" />
<text x="389" y="624" font-family="'Liberation Serif', serif" font-size="14.67" fill="#000000" textLength="84" lengthAdjust="spacingAndGlyphs" >Исполнитель:</text>
<rect x="477" y="626" width="184.3" height="1.1" fill="#000" />
<rect x="396" y="110" width="211" height="90" fill="#000" opacity="0.08" filter="url(#sh)"/>
<rect x="395.5" y="108.5" width="211" height="90" fill="#ffffff" stroke="#5e5e5e" stroke-width="1"/>
<rect x="397" y="110" width="208" height="28" fill="#f3f3f3" />
<text x="434.3" y="128" font-family="'Liberation Sans', sans-serif" font-size="12" fill="#1c1c1c" textLength="148" lengthAdjust="spacingAndGlyphs" >Вставить разрыв страницы</text>
<rect x="434.5" y="130" width="7" height="1" fill="#262626" />
<text x="434.3" y="156" font-family="'Liberation Sans', sans-serif" font-size="12" fill="#1c1c1c" textLength="143.5" lengthAdjust="spacingAndGlyphs" >Удалить разрыв страницы</text>
<rect x="434.5" y="158" width="7" height="1" fill="#262626" />
<rect x="429" y="167" width="176" height="1" fill="#d0d0d0" />
<text x="434.3" y="186.5" font-family="'Liberation Sans', sans-serif" font-size="12" fill="#1c1c1c" textLength="139" lengthAdjust="spacingAndGlyphs" >Сброс разрывов страниц</text>
<rect x="479.6" y="188.3" width="5.4" height="1" fill="#262626" />
<path d="M222.6 370.7 L404.5 145" stroke="#ff0000" stroke-width="5.2" stroke-linecap="round"/>
<path d="M421.5 124.8 L399.9 139.7 L411.9 148.3 Z" fill="#ff0000"/>
</svg></body></html>
